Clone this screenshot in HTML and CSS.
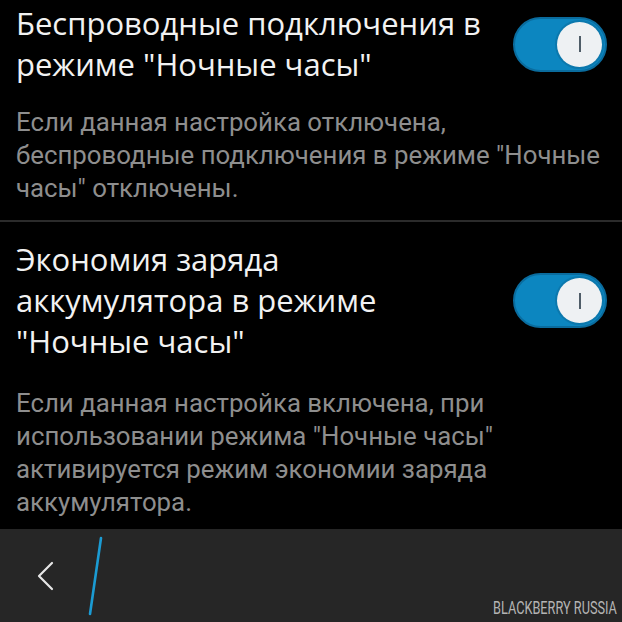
FILE: index.html
```html
<!DOCTYPE html>
<html lang="ru">

<head>
    <meta charset="UTF-8">
    <meta name="viewport" content="width=device-width, initial-scale=1.0">
    <title>Ночные часы</title>
    <link rel="stylesheet" href="styles.css">
</head>

<body>
    <div class="settings">
        <div class="setting first">
            <div class="setting-row">
                <div class="setting-title">Беспроводные подключения в<br>режиме "Ночные часы"</div>
                <div class="toggle on"><span class="knob"></span></div>
            </div>
            <div class="setting-desc">Если данная настройка отключена,<br>беспроводные подключения в режиме "Ночные<br>часы" отключены.</div>
        </div>

        <div class="setting">
            <div class="setting-row">
                <div class="setting-title">Экономия заряда<br>аккумулятора в режиме<br>"Ночные часы"</div>
                <div class="toggle on"><span class="knob"></span></div>
            </div>
            <div class="setting-desc">Если данная настройка включена, при<br>использовании режима "Ночные часы"<br>активируется режим экономии заряда<br>аккумулятора.</div>
        </div>
    </div>

    <div class="action-bar">
        <button class="back-btn" aria-label="Назад">
            <svg width="24" height="34" viewBox="0 0 24 34">
                <polyline points="16,4 3,17 16,30" fill="none" stroke="#e6e6e6" stroke-width="2.2" stroke-linecap="round" stroke-linejoin="round" />
            </svg>
        </button>
        <svg class="bar-divider" width="20" height="80" viewBox="0 0 20 80">
            <line x1="16" y1="2" x2="5" y2="78" stroke="#1b9bd3" stroke-width="2.6" stroke-linecap="round" />
        </svg>
    </div>

    <div class="watermark">BLACKBERRY RUSSIA</div>
</body>

</html>
```

FILE: styles.css
```css
html,
body {
    margin: 0;
    padding: 0;
    height: 100%;
}

body {
    background-color: #000;
    color: #f2f2f2;
    font-family: 'Open Sans', 'Noto Sans', sans-serif;
    display: flex;
    flex-direction: column;
    overflow: hidden;
    position: relative;
}

.settings {
    flex: 1;
}

.setting {
    padding: 17px 15px 0 16px;
}

.setting.first {
    padding-top: 3px;
    padding-bottom: 15px;
    border-bottom: 2px solid #2b2b2b;
}

.setting-row {
    display: flex;
    align-items: center;
    justify-content: space-between;
}

.setting-title {
    font-size: 31px;
    line-height: 41px;
    white-space: nowrap;
}

.setting-desc {
    margin-top: 25px;
    font-family: 'Roboto', 'Open Sans', sans-serif;
    font-size: 25.8px;
    line-height: 33px;
    color: #8e8e8e;
    white-space: nowrap;
}

.setting.first .setting-desc {
    margin-top: 21px;
}

/* switch: blue track with the white knob parked on the right */
.toggle {
    width: 94px;
    height: 55px;
    box-sizing: border-box;
    border-radius: 28px;
    background-color: #0c86c0;
    border: 2px solid #0a6c9e;
    display: flex;
    align-items: center;
    justify-content: flex-end;
    padding-right: 3px;
}

.knob {
    width: 45px;
    height: 45px;
    border-radius: 50%;
    background-color: #eef1f3;
    box-shadow: 0 0 0 2px #0b78ad;
    display: flex;
    align-items: center;
    justify-content: center;
}

.knob::before {
    content: '';
    width: 2px;
    height: 16px;
    background-color: #4f5d68;
}

.action-bar {
    height: 93px;
    background-color: #262626;
    display: flex;
    align-items: center;
}

.back-btn {
    background: none;
    border: none;
    padding: 0;
    margin-left: 36px;
    width: 24px;
    height: 34px;
}

.back-btn svg {
    display: block;
}

.bar-divider {
    margin-left: 25px;
    align-self: flex-start;
    margin-top: 7px;
}

.watermark {
    position: absolute;
    right: 5px;
    bottom: 3px;
    font-family: 'Roboto', sans-serif;
    font-size: 19px;
    color: #b4b4b4;
    transform: scaleX(0.67);
    transform-origin: right bottom;
}
```
